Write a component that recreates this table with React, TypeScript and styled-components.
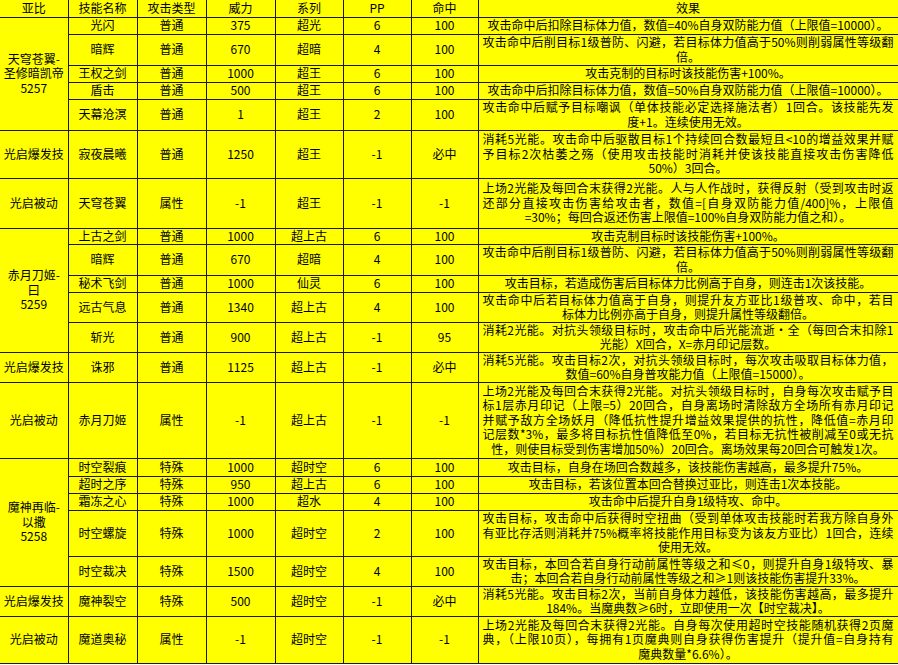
import React from "react";
import styled, { createGlobalStyle } from "styled-components";

const Global = createGlobalStyle`
  html, body { margin: 0; padding: 0; background: #ffffff; }
  body { font-family: "Noto Sans CJK SC", "Noto Sans", sans-serif; }
`;

const Table = styled.table`
  width: 898px;
  table-layout: fixed;
  border-collapse: collapse;
  background: #ffff00;
  color: #000;
  font-size: 12px;
  line-height: 14.5px;
`;

const Row = styled.tr<{ $h: number }>`
  height: ${(p) => p.$h}px;
`;

const Cell = styled.td<{ $first?: boolean; $top?: boolean }>`
  border: 1px solid #1a1a1a;
  ${(p) => (p.$first ? "border-left: none;" : "")}
  ${(p) => (p.$top ? "border-top: none;" : "")}
  padding: 0;
  text-align: center;
  vertical-align: middle;
  white-space: nowrap;
`;

const EffectCell = styled(Cell)`
  padding: 0 4px;
  white-space: normal;
`;

const Line = styled.div<{ $full?: boolean }>`
  text-align: ${(p) => (p.$full ? "justify" : "center")};
  text-align-last: ${(p) => (p.$full ? "justify" : "center")};
`;

type Skill = {
  name: string;
  type: string;
  power: string;
  series: string;
  pp: string;
  hit: string;
  effect: string[];
  h: number;
};

type Group = { label: string[]; skills: Skill[] };

const ANHUI = [
  "攻击命中后削目标1级普防、闪避，若目标体力值高于50%则削弱属性等级翻",
  "倍。",
];

const groups: Group[] = [
  {
    label: ["天穹苍翼-", "圣修暗凯帝", "5257"],
    skills: [
      { name: "光闪", type: "普通", power: "375", series: "超光", pp: "6", hit: "100", h: 17,
        effect: ["攻击命中后扣除目标体力值，数值=40%自身双防能力值（上限值=10000）。"] },
      { name: "暗辉", type: "普通", power: "670", series: "超暗", pp: "4", hit: "100", h: 31, effect: ANHUI },
      { name: "王权之剑", type: "普通", power: "1000", series: "超王", pp: "6", hit: "100", h: 17,
        effect: ["攻击克制的目标时该技能伤害+100%。"] },
      { name: "盾击", type: "普通", power: "500", series: "超王", pp: "6", hit: "100", h: 17,
        effect: ["攻击命中后扣除目标体力值，数值=50%自身双防能力值（上限值=10000）。"] },
      { name: "天幕沧溟", type: "普通", power: "1", series: "超王", pp: "2", hit: "100", h: 31,
        effect: ["攻击命中后赋予目标嘲讽（单体技能必定选择施法者）1回合。该技能先发", "度+1。连续使用无效。"] },
    ],
  },
  {
    label: ["光启爆发技"],
    skills: [
      { name: "寂夜晨曦", type: "普通", power: "1250", series: "超王", pp: "-1", hit: "必中", h: 48,
        effect: [
          "消耗5光能。攻击命中后驱散目标1个持续回合数最短且<10的增益效果并赋",
          "予目标2次枯萎之殇（使用攻击技能时消耗并使该技能直接攻击伤害降低",
          "50%）3回合。",
        ] },
    ],
  },
  {
    label: ["光启被动"],
    skills: [
      { name: "天穹苍翼", type: "属性", power: "-1", series: "超王", pp: "-1", hit: "-1", h: 50,
        effect: [
          "上场2光能及每回合末获得2光能。人与人作战时，获得反射（受到攻击时返",
          "还部分直接攻击伤害给攻击者，数值=[自身双防能力值/400]%，上限值",
          "=30%；每回合返还伤害上限值=100%自身双防能力值之和）。",
        ] },
    ],
  },
  {
    label: ["赤月刀姬-", "曰", "5259"],
    skills: [
      { name: "上古之剑", type: "普通", power: "1000", series: "超上古", pp: "6", hit: "100", h: 16,
        effect: ["攻击克制目标时该技能伤害+100%。"] },
      { name: "暗辉", type: "普通", power: "670", series: "超暗", pp: "4", hit: "100", h: 31, effect: ANHUI },
      { name: "秘术飞剑", type: "普通", power: "1000", series: "仙灵", pp: "6", hit: "100", h: 17,
        effect: ["攻击目标，若造成伤害后目标体力比例高于自身，则连击1次该技能。"] },
      { name: "远古气息", type: "普通", power: "1340", series: "超上古", pp: "4", hit: "100", h: 30,
        effect: ["攻击命中后若目标体力值高于自身，则提升友方亚比1级普攻、命中，若目", "标体力比例亦高于自身，则提升属性等级翻倍。"] },
      { name: "斩光", type: "普通", power: "900", series: "超上古", pp: "-1", hit: "95", h: 30,
        effect: ["消耗2光能。对抗头领级目标时，攻击命中后光能流逝·全（每回合末扣除1", "光能）X回合，X=赤月印记层数。"] },
    ],
  },
  {
    label: ["光启爆发技"],
    skills: [
      { name: "诛邪", type: "普通", power: "1125", series: "超上古", pp: "-1", hit: "必中", h: 30,
        effect: ["消耗5光能。攻击目标2次，对抗头领级目标时，每次攻击吸取目标体力值，", "数值=60%自身普攻能力值（上限值=15000）。"] },
    ],
  },
  {
    label: ["光启被动"],
    skills: [
      { name: "赤月刀姬", type: "属性", power: "-1", series: "超上古", pp: "-1", hit: "-1", h: 76,
        effect: [
          "上场2光能及每回合末获得2光能。对抗头领级目标时，自身每次攻击赋予目",
          "标1层赤月印记（上限=5）20回合，自身离场时清除敌方全场所有赤月印记",
          "并赋予敌方全场妖月（降低抗性提升增益效果提供的抗性，降低值=赤月印",
          "记层数*3%，最多将目标抗性值降低至0%，若目标无抗性被削减至0或无抗",
          "性，则使目标受到伤害增加50%）20回合。离场效果每20回合可触发1次。",
        ] },
    ],
  },
  {
    label: ["魔神再临-", "以撒", "5258"],
    skills: [
      { name: "时空裂痕", type: "特殊", power: "1000", series: "超时空", pp: "6", hit: "100", h: 18,
        effect: ["攻击目标，自身在场回合数越多，该技能伤害越高，最多提升75%。"] },
      { name: "超时之序", type: "特殊", power: "950", series: "超上古", pp: "6", hit: "100", h: 17,
        effect: ["攻击目标，若该位置本回合替换过亚比，则连击1次本技能。"] },
      { name: "霜冻之心", type: "特殊", power: "1000", series: "超水", pp: "4", hit: "100", h: 17,
        effect: ["攻击命中后提升自身1级特攻、命中。"] },
      { name: "时空螺旋", type: "特殊", power: "1000", series: "超时空", pp: "2", hit: "100", h: 46,
        effect: [
          "攻击目标，攻击命中后获得时空扭曲（受到单体攻击技能时若我方除自身外",
          "有亚比存活则消耗并75%概率将技能作用目标变为该友方亚比）1回合，连续",
          "使用无效。",
        ] },
      { name: "时空裁决", type: "特殊", power: "1500", series: "超时空", pp: "4", hit: "100", h: 30,
        effect: ["攻击目标，本回合若自身行动前属性等级之和≤0，则提升自身1级特攻、暴", "击；本回合若自身行动前属性等级之和≥1则该技能伤害提升33%。"] },
    ],
  },
  {
    label: ["光启爆发技"],
    skills: [
      { name: "魔神裂空", type: "特殊", power: "500", series: "超时空", pp: "-1", hit: "必中", h: 30,
        effect: ["消耗5光能。攻击目标2次，当前自身体力越低，该技能伤害越高，最多提升", "184%。当魔典数≥6时，立即使用一次【时空裁决】。"] },
    ],
  },
  {
    label: ["光启被动"],
    skills: [
      { name: "魔道奥秘", type: "属性", power: "-1", series: "超时空", pp: "-1", hit: "-1", h: 47,
        effect: [
          "上场2光能及每回合末获得2光能。自身每次使用超时空技能随机获得2页魔",
          "典，（上限10页），每拥有1页魔典则自身获得伤害提升（提升值=自身持有",
          "魔典数量*6.6%）。",
        ] },
    ],
  },
];

const headers = ["亚比", "技能名称", "攻击类型", "威力", "系列", "PP", "命中", "效果"];
const widths = [68, 69, 69, 69, 68, 68, 67, 420];

export default function App() {
  return (
    <>
      <Global />
      <Table>
        <colgroup>
          {widths.map((w, i) => (
            <col key={i} width={w} />
          ))}
        </colgroup>
        <tbody>
          <Row $h={17}>
            {headers.map((h, i) => (
              <Cell key={h} $top $first={i === 0}>
                {h}
              </Cell>
            ))}
          </Row>
          {groups.map((g, gi) =>
            g.skills.map((s, si) => (
              <Row key={`${gi}-${si}`} $h={s.h}>
                {si === 0 && (
                  <Cell $first rowSpan={g.skills.length}>
                    {g.label.map((l) => (
                      <Line key={l}>{l}</Line>
                    ))}
                  </Cell>
                )}
                <Cell>{s.name}</Cell>
                <Cell>{s.type}</Cell>
                <Cell>{s.power}</Cell>
                <Cell>{s.series}</Cell>
                <Cell>{s.pp}</Cell>
                <Cell>{s.hit}</Cell>
                <EffectCell>
                  {s.effect.map((l, li) => (
                    <Line key={li} $full={li < s.effect.length - 1}>
                      {l}
                    </Line>
                  ))}
                </EffectCell>
              </Row>
            ))
          )}
        </tbody>
      </Table>
    </>
  );
}
